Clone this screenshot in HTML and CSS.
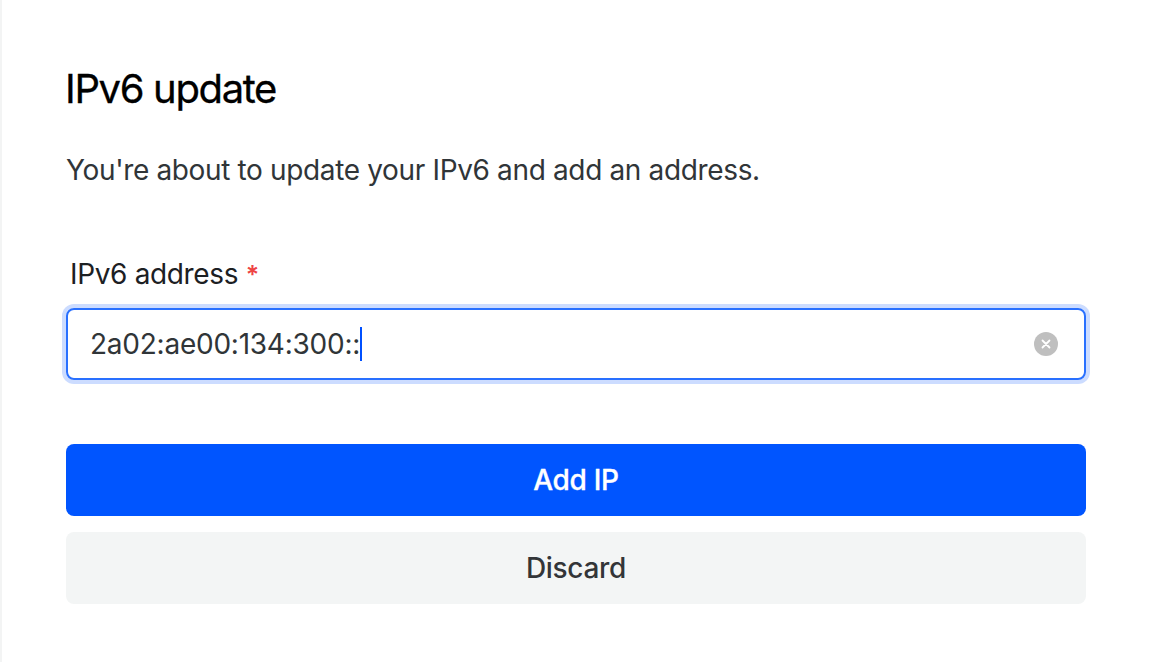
FILE: index.html
```html
<!DOCTYPE html>
<html lang="en">
<head>
  <meta charset="UTF-8">
  <meta name="viewport" content="width=device-width, initial-scale=1.0">
  <title>IPv6 update</title>
  <link rel="stylesheet" href="styles.css">
</head>
<body>
  <div class="panel">
    <h1>IPv6 update</h1>
    <p class="intro">You're about to update your IPv6 and add an address.</p>

    <form class="ip-form">
      <div class="label">IPv6 address <span class="required">*</span></div>
      <div class="input-box">
        <span class="value">2a02:ae00:134:300::</span><span class="caret"></span>
        <svg class="clear" viewBox="0 0 24 24" width="24" height="24">
          <circle cx="12" cy="12" r="12" fill="#bfbfbf"/>
          <path d="M8.5 8.5l7 7M15.5 8.5l-7 7" stroke="#fff" stroke-width="1.8" stroke-linecap="round"/>
        </svg>
      </div>

      <button type="button" class="btn btn-primary">Add IP</button>
      <button type="button" class="btn btn-default">Discard</button>
    </form>
  </div>
</body>
</html>
```

FILE: styles.css
```css
* {
  box-sizing: border-box;
}

body {
  margin: 0;
  background-color: #fff;
  font-family: Inter, sans-serif;
  color: #303538;
}

.panel {
  height: 662px;
  border-left: 2px solid #f3f4f4;
  padding: 63px 64px 0;
}

h1 {
  margin: 0 0 0 -1px;
  font-size: 40px;
  font-weight: 400;
  line-height: 52px;
  color: #000;
  letter-spacing: -1.35px;
  -webkit-text-stroke: 0.3px #000;
}

.intro {
  margin: 35px 0 0;
  font-size: 28px;
  line-height: 40px;
  letter-spacing: -0.35px;
}

.label {
  margin: 65px 0 0 4px;
  font-size: 28px;
  line-height: 38px;
  color: #1c2023;
  letter-spacing: -0.35px;
}

.required {
  font-size: 25px;
  font-weight: 600;
  line-height: 20px;
  color: #ee4444;
}

.input-box {
  display: flex;
  align-items: center;
  width: 1020px;
  height: 72px;
  margin-top: 15px;
  padding: 0 26px 0 22px;
  border: 2px solid #2970ff;
  border-radius: 8px;
  box-shadow: 0 0 0 4px #ccdcff;
  font-size: 28px;
}

.value {
  letter-spacing: -0.24px;
}

.caret {
  width: 2px;
  height: 34px;
  background-color: #0050ff;
}

.clear {
  margin-left: auto;
}

.btn {
  display: block;
  width: 1020px;
  height: 72px;
  border: none;
  border-radius: 8px;
  font-family: inherit;
  font-size: 28px;
  font-weight: 500;
  letter-spacing: -0.3px;
  cursor: pointer;
}

.btn-primary {
  margin-top: 64px;
  background-color: #0055ff;
  color: #fff;
  -webkit-text-stroke: 0.3px #fff;
}

.btn-default {
  margin-top: 16px;
  background-color: #f3f5f5;
  color: #333538;
}
```
